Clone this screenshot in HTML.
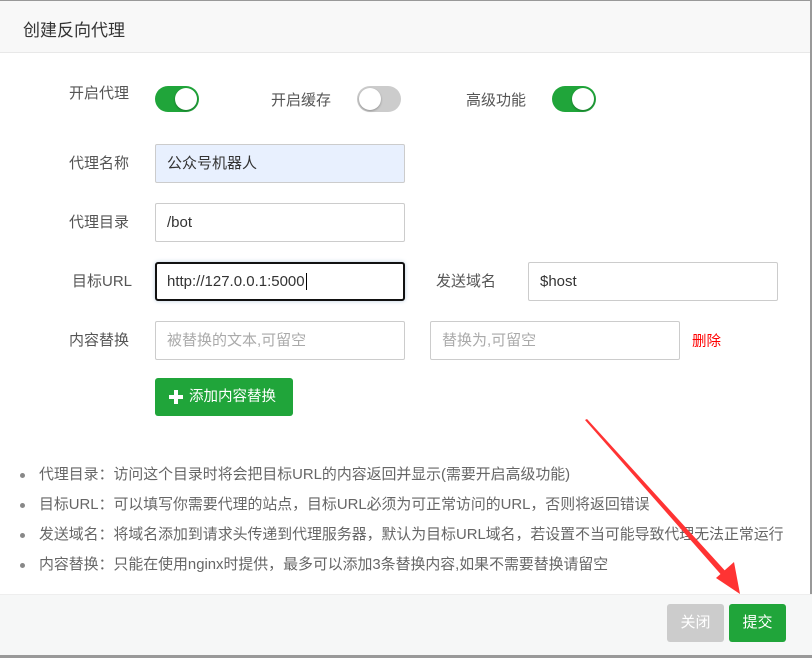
<!DOCTYPE html>
<html><head><meta charset="utf-8"><style>
*{box-sizing:border-box;margin:0;padding:0}
body{width:812px;height:658px;overflow:hidden;background:#fff;font-family:"Liberation Sans","Noto Sans CJK SC",sans-serif;color:#555;position:relative}
.hdr{position:absolute;left:0;top:0;width:812px;height:53px;background:#f8f8f8;border-bottom:1px solid #e8e8e8;border-top:1px solid #999}
.hdr span{position:absolute;left:23px;top:15px;font-size:17px;color:#333}
.lbl{position:absolute;font-size:15px;color:#555;text-align:right}
.tg{position:absolute;width:44px;height:26px;border-radius:13px;background:#20a53a}
.tg i{position:absolute;top:2px;width:22px;height:22px;border-radius:50%;background:#fff;box-shadow:0 1px 2px rgba(0,0,0,.3)}
.tg.on i{left:20px}.tg.off{background:#ccc}.tg.off i{left:2px}
.in{position:absolute;height:39px;border:1px solid #ccc;border-radius:2px;font-size:15px;color:#333;padding:10px 11px;line-height:18px;background:#fff}
.ph{color:#aaa}
.btn{position:absolute;left:155px;top:378px;width:138px;height:38px;background:#20a53a;border-radius:3px;color:#fff;font-size:14.5px;line-height:38px;padding-left:34px}
.plus{position:absolute;left:14px;top:12px;width:14px;height:14px}
.plus:before{content:"";position:absolute;left:5px;top:0;width:4px;height:14px;background:#fff}
.plus:after{content:"";position:absolute;left:0;top:5px;width:14px;height:4px;background:#fff}
ul{position:absolute;left:20px;top:463px;list-style:none;font-size:14.9px;color:#666}
li{height:30px;line-height:24px;padding-left:19px;position:relative;white-space:nowrap}
li:before{content:"";position:absolute;left:0;top:10px;width:5px;height:5px;border-radius:50%;background:#888}
.ftr{position:absolute;left:0;top:594px;width:812px;height:61px;background:#f6f7f7;border-top:1px solid #eee}
.fb{position:absolute;top:604px;height:38px;width:57px;border-radius:3px;color:#fff;font-size:15px;text-align:center;line-height:38px}
</style></head><body>
<div class="hdr"><span>创建反向代理</span></div>
<div style="position:absolute;right:0;top:0;width:2px;height:658px;background:#999"></div>
<div class="lbl" style="left:69px;top:82px">开启代理</div>
<div class="tg on" style="left:155px;top:86px"><i></i></div>
<div class="lbl" style="left:271px;top:89px">开启缓存</div>
<div class="tg off" style="left:357px;top:86px"><i></i></div>
<div class="lbl" style="left:466px;top:89px">高级功能</div>
<div class="tg on" style="left:552px;top:86px"><i></i></div>

<div class="lbl" style="left:69px;top:152px">代理名称</div>
<div class="in" style="left:155px;top:144px;width:250px;background:#e8f0fe">公众号机器人</div>
<div class="lbl" style="left:69px;top:211px">代理目录</div>
<div class="in" style="left:155px;top:203px;width:250px">/bot</div>
<div class="lbl" style="left:72px;top:270px">目标URL</div>
<div class="in" style="left:155px;top:262px;width:250px;border:2px solid #111;border-radius:3px;padding:9px 10px;box-shadow:0 0 4px #bcd">http://127.0.0.1:5000<span style="border-left:1px solid #000;margin-left:1px"></span></div>
<div class="lbl" style="left:436px;top:270px">发送域名</div>
<div class="in" style="left:528px;top:262px;width:250px">$host</div>
<div class="lbl" style="left:69px;top:329px">内容替换</div>
<div class="in ph" style="left:155px;top:321px;width:250px">被替换的文本,可留空</div>
<div class="in ph" style="left:430px;top:321px;width:250px">替换为,可留空</div>
<div class="lbl" style="left:692px;top:330px;color:#f00;font-size:14.5px">删除</div>
<div class="btn"><span class="plus"></span>添加内容替换</div>

<ul>
<li>代理目录：访问这个目录时将会把目标URL的内容返回并显示(需要开启高级功能)</li>
<li>目标URL：可以填写你需要代理的站点，目标URL必须为可正常访问的URL，否则将返回错误</li>
<li>发送域名：将域名添加到请求头传递到代理服务器，默认为目标URL域名，若设置不当可能导致代理无法正常运行</li>
<li>内容替换：只能在使用nginx时提供，最多可以添加3条替换内容,如果不需要替换请留空</li>
</ul>
<div class="ftr"></div>
<div class="fb" style="left:667px;background:#ccc">关闭</div>
<div class="fb" style="left:729px;background:#20a53a">提交</div>
<div style="position:absolute;left:0;top:655px;width:812px;height:3px;background:#999"></div>
<svg style="position:absolute;left:0;top:0" width="812" height="658">
<polygon points="585,420 587,419 728,574 724,578" fill="#f33"/>
<polygon points="740,594 716,578 734,562" fill="#f33"/>
</svg>
</body></html>
